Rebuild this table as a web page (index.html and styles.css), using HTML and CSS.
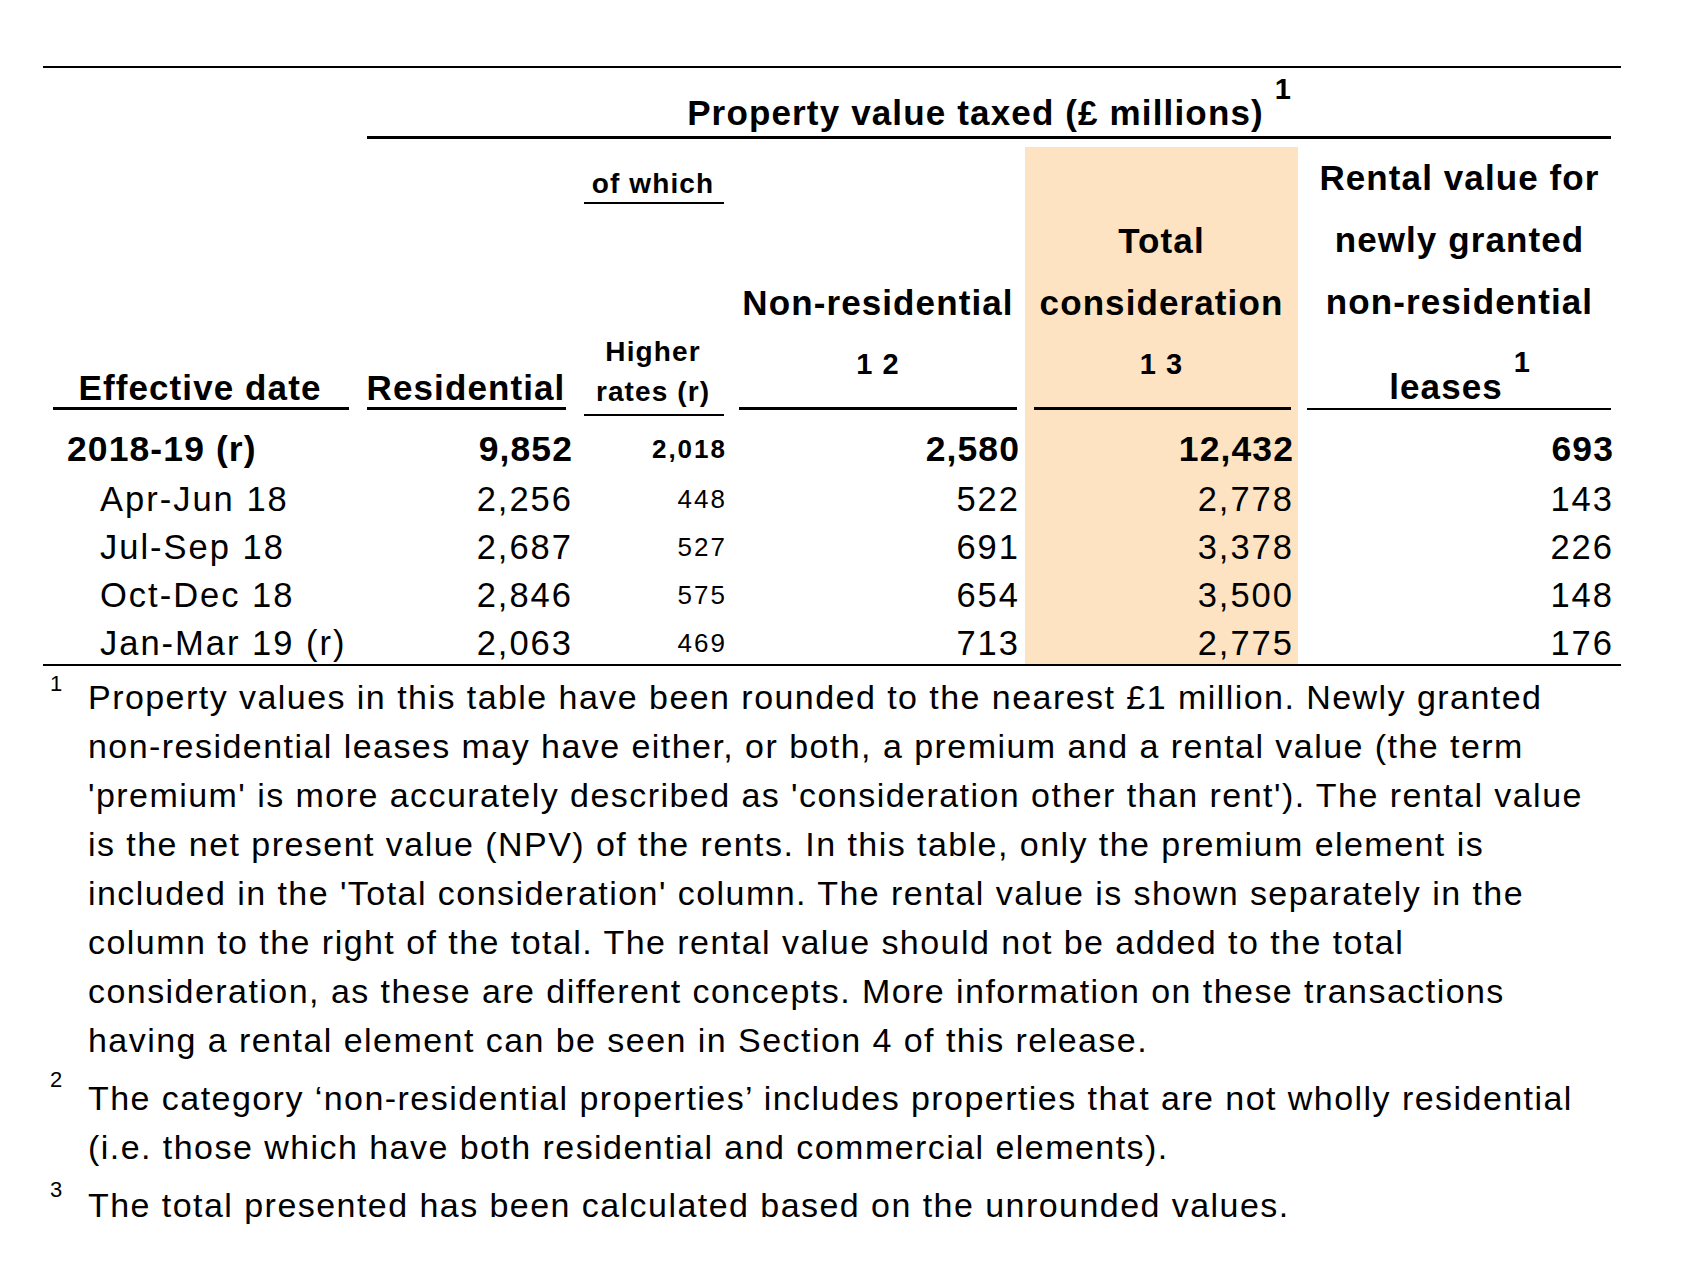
FILE: index.html
```html
<!DOCTYPE html>
<html lang="en">
<head>
<meta charset="utf-8">
<title>Property value taxed</title>
<link rel="stylesheet" href="styles.css">
</head>
<body>
<div class="sheet">
  <div class="rule-top"></div>
  <div class="table">
    <div class="blank"></div>
    <div class="title-cell">
      <div class="title">Property value taxed (£ millions) <span class="sup">1</span></div>
      <div class="uline"></div>
    </div>

    <div class="hcell c1"><div class="hbottom">Effective date</div><div class="uline"></div></div>
    <div class="hcell c2"><div class="hbottom">Residential</div><div class="uline"></div></div>
    <div class="hcell c3">
      <div class="sm ofwhich">of which</div>
      <div class="uline thin top"></div>
      <div class="spacer"></div>
      <div class="sm higher">Higher</div>
      <div class="sm rates">rates (r)</div>
      <div class="uline thin"></div>
    </div>
    <div class="hcell c4">
      <div class="hline">Non-residential</div>
      <div class="ref">1 2</div>
      <div class="uline"></div>
    </div>
    <div class="hcell c5 bg">
      <div class="hline">Total</div>
      <div class="hline">consideration</div>
      <div class="ref">1 3</div>
      <div class="uline"></div>
    </div>
    <div class="hcell c6">
      <div class="hline">Rental value for</div>
      <div class="hline">newly granted</div>
      <div class="hline">non-residential</div>
      <div class="hbottom leases">leases <span class="sup">1</span></div>
      <div class="uline"></div>
    </div>

    <div class="d lab tot r1">2018-19 (r)</div>
    <div class="d n2 tot r1">9,852</div>
    <div class="d n3 tot hrn r1">2,018</div>
    <div class="d n4 tot r1">2,580</div>
    <div class="d n5 tot bg r1">12,432</div>
    <div class="d n6 tot r1">693</div>

    <div class="d lab">Apr-Jun 18</div>
    <div class="d n2">2,256</div>
    <div class="d n3 hrn">448</div>
    <div class="d n4">522</div>
    <div class="d n5 bg">2,778</div>
    <div class="d n6">143</div>

    <div class="d lab">Jul-Sep 18</div>
    <div class="d n2">2,687</div>
    <div class="d n3 hrn">527</div>
    <div class="d n4">691</div>
    <div class="d n5 bg">3,378</div>
    <div class="d n6">226</div>

    <div class="d lab">Oct-Dec 18</div>
    <div class="d n2">2,846</div>
    <div class="d n3 hrn">575</div>
    <div class="d n4">654</div>
    <div class="d n5 bg">3,500</div>
    <div class="d n6">148</div>

    <div class="d lab">Jan-Mar 19 (r)</div>
    <div class="d n2">2,063</div>
    <div class="d n3 hrn">469</div>
    <div class="d n4">713</div>
    <div class="d n5 bg">2,775</div>
    <div class="d n6">176</div>
  </div>

  <div class="notes">
    <div class="note note1">
      <div class="nsup">1</div>
      <div class="ntext">
        <span class="ln">Property values in this table have been rounded to the nearest £1 million. Newly granted</span>
        <span class="ln">non-residential leases may have either, or both, a premium and a rental value (the term</span>
        <span class="ln">'premium' is more accurately described as 'consideration other than rent'). The rental value</span>
        <span class="ln">is the net present value (NPV) of the rents. In this table, only the premium element is</span>
        <span class="ln">included in the 'Total consideration' column. The rental value is shown separately in the</span>
        <span class="ln">column to the right of the total. The rental value should not be added to the total</span>
        <span class="ln">consideration, as these are different concepts. More information on these transactions</span>
        <span class="ln">having a rental element can be seen in Section 4 of this release.</span>
      </div>
    </div>
    <div class="note note2">
      <div class="nsup">2</div>
      <div class="ntext">
        <span class="ln">The category ‘non-residential properties’ includes properties that are not wholly residential</span>
        <span class="ln">(i.e. those which have both residential and commercial elements).</span>
      </div>
    </div>
    <div class="note note3">
      <div class="nsup">3</div>
      <div class="ntext">
        <span class="ln">The total presented has been calculated based on the unrounded values.</span>
      </div>
    </div>
  </div>
</div>
</body>
</html>
```

FILE: styles.css
```css
* { box-sizing: border-box; margin: 0; padding: 0; }
html, body { background: #ffffff; }
body {
  color: #000000;
  font-family: "Liberation Sans", Arial, sans-serif;
}

.sheet {
  width: 1578px;
  margin-left: 43px;
  padding-top: 66px;
}

.rule-top { height: 2px; background: #000; }

.table {
  display: grid;
  grid-template-columns: 314px 218px 156px 294px 273px 323px;
  grid-template-rows: 79px 269px 59px 48px 48px 48px 44.5px;
}

.bg { background: #fde3c1; }

/* title */
.title-cell {
  grid-column: 2 / 7;
  padding-top: 25px;
  text-align: center;
}
.title {
  font-weight: 700;
  font-size: 35px;
  line-height: 40px;
  letter-spacing: 1.15px;
  white-space: nowrap;
}
.sup {
  position: relative;
  top: -26px;
  font-size: 29px;
  letter-spacing: 0;
}
.uline { height: 3px; background: #000; }
.title-cell .uline { margin: 1px 10px 0 10px; }

/* header cells */
.hcell {
  display: flex;
  flex-direction: column;
  justify-content: flex-end;
  text-align: center;
  padding-bottom: 6px;
  font-weight: 700;
  font-size: 35px;
  letter-spacing: 1.1px;
  white-space: nowrap;
}
.hline { line-height: 62px; }
.hbottom { line-height: 32px; margin-bottom: 3px; }
.leases { margin-top: 38px; }
.leases .sup { top: -27px; }
.ref {
  font-size: 29px;
  line-height: 61px;
  margin-bottom: 12px;
  letter-spacing: 1px;
}

.c1 .uline { margin: 0 8.5px 0 9.5px; }
.c2 .uline { margin: 0 9px 0 9.7px; }
.c4 .uline { margin: 0 7.6px 0 7.7px; }
.c5 .uline { margin: 0 7.2px 0 8.5px; }
.c6 .uline { margin: 0 10px 0 9px; }

.hcell.c3 {
  justify-content: flex-start;
  padding-bottom: 0;
}
.c3 .uline { margin: 0 7px 0 9px; }
.uline.thin { height: 2px; }
.uline.top { margin-top: 1px; }
.sm {
  font-size: 28px;
  line-height: 34px;
  letter-spacing: 1.1px;
}
.ofwhich { margin-top: 20px; }
.spacer { flex: 1; }
.higher { margin-bottom: 6px; }
.rates { margin-bottom: 5px; }

/* data */
.d {
  font-size: 34.5px;
  line-height: 48px;
  letter-spacing: 2px;
  white-space: nowrap;
  text-align: right;
}
.d.r1 { padding-top: 9px; }
.d.lab { text-align: left; padding-left: 57px; }
.d.tot {
  font-weight: 700;
  font-size: 35.5px;
  letter-spacing: 1.1px;
}
.d.lab.tot { padding-left: 24px; }
.d.hrn { font-size: 26px; letter-spacing: 2px; }
.n2 { padding-right: 2px; }
.n3 { padding-right: 4px; }
.n4 { padding-right: 5px; }
.n5 { padding-right: 4px; }
.n6 { padding-right: 7px; }

/* footnotes */
.notes {
  border-top: 2px solid #000;
  padding-top: 7px;
  font-size: 34px;
  line-height: 49px;
  letter-spacing: 1.45px;
}
.note {
  display: grid;
  grid-template-columns: 45px auto;
}
.nsup {
  font-size: 22px;
  line-height: 22px;
  letter-spacing: 0;
  padding-left: 7px;
  margin-top: 0;
}
.note2 { margin-top: 9px; }
.note2 .nsup { margin-top: -4.5px; }
.note3 { margin-top: 9px; }
.note3 .nsup { margin-top: -2px; }
.ln { display: block; white-space: nowrap; }
```
